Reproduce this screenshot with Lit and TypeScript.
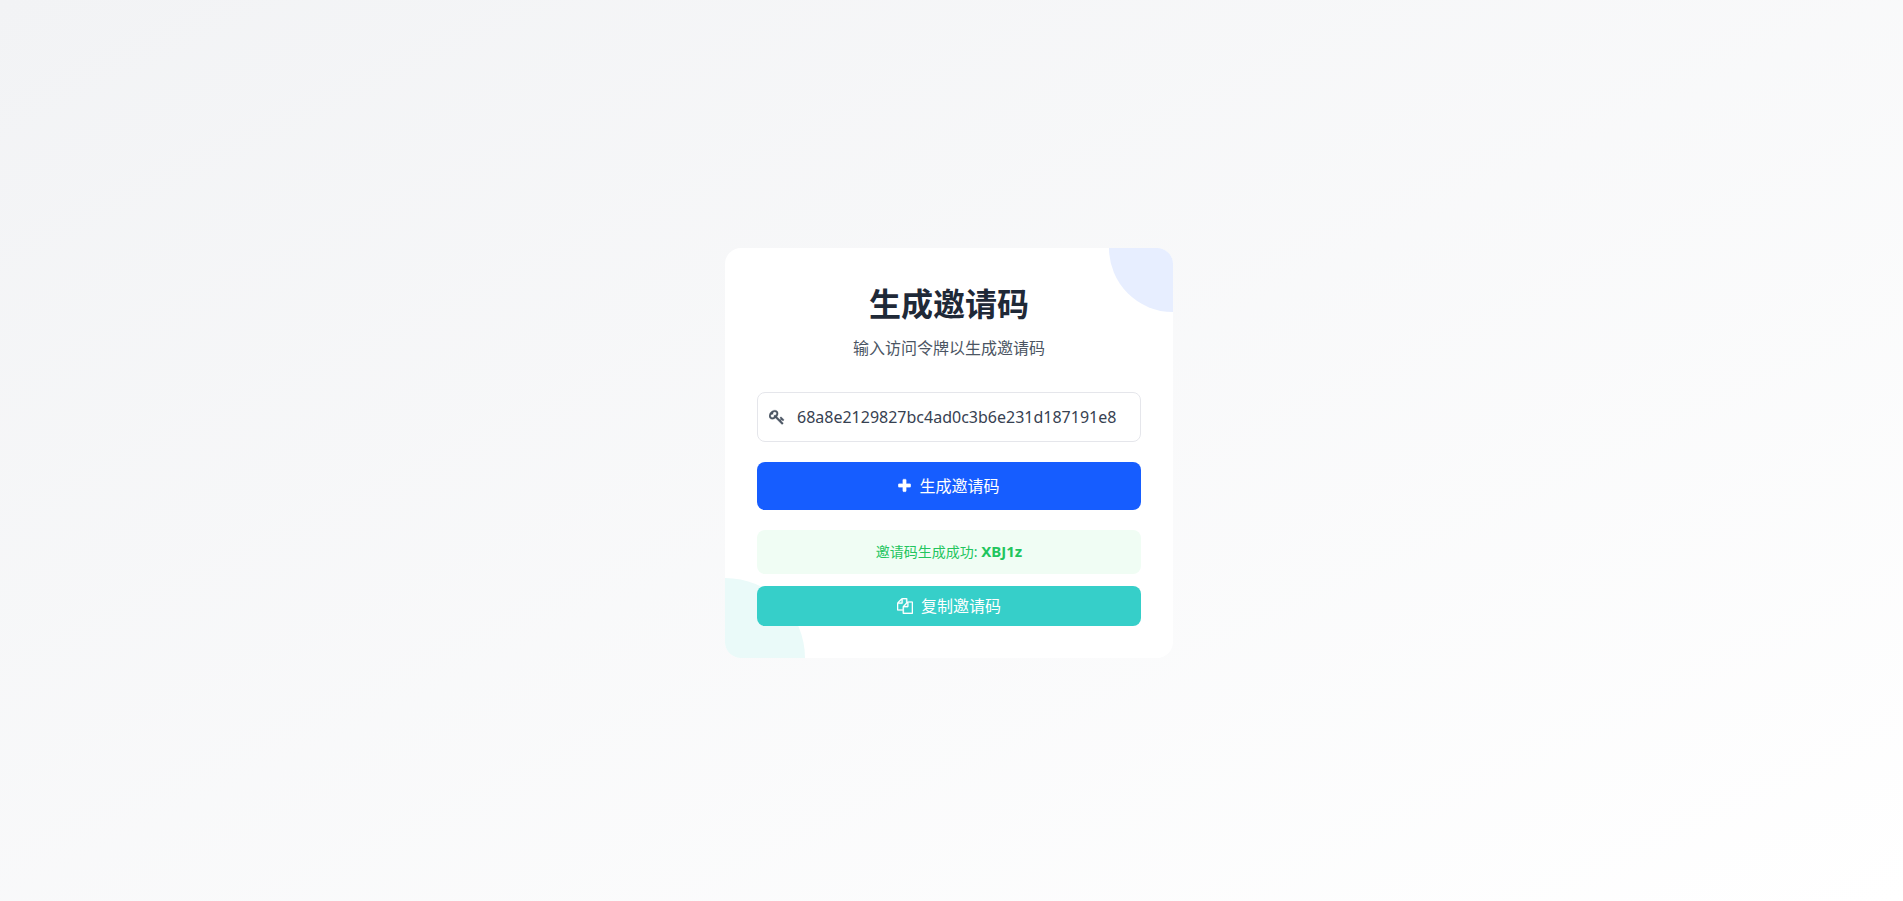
import { LitElement, html, css } from "lit";
import { customElement, state } from "lit/decorators.js";

@customElement("app-root")
export class AppRoot extends LitElement {
  @state() private token = "68a8e2129827bc4ad0c3b6e231d187191e8";
  @state() private code = "XBJ1z";

  static styles = css`
    :host {
      display: block;
      font-family: "Noto Sans", "Noto Sans CJK SC", sans-serif;
      font-size: 16px;
      line-height: 24px;
    }
    * {
      box-sizing: border-box;
    }
    .page {
      min-height: 100vh;
      display: flex;
      align-items: center;
      justify-content: center;
      padding: 20px 21px 16px 16px;
      background: linear-gradient(to bottom right, #f2f3f5, #ffffff);
    }
    .card {
      position: relative;
      overflow: hidden;
      width: 100%;
      max-width: 448px;
      padding: 32px;
      border-radius: 16px;
      background: #ffffff;
    }
    .blob {
      position: absolute;
      border-radius: 50%;
    }
    .blob-top {
      top: -64px;
      right: -64px;
      width: 128px;
      height: 128px;
      background: #e7eeff;
    }
    .blob-bottom {
      bottom: -80px;
      left: -80px;
      width: 160px;
      height: 160px;
      background: #eafaf9;
    }
    .content {
      position: relative;
      display: flex;
      flex-direction: column;
    }
    header {
      text-align: center;
      margin-bottom: 32px;
    }
    h1 {
      margin: 0 0 8px;
      font-size: 32px;
      line-height: 48px;
      font-weight: 700;
      color: #1f2937;
    }
    p {
      margin: 0;
      color: #4b5563;
    }
    form {
      display: flex;
      flex-direction: column;
      gap: 20px;
    }
    .field {
      display: flex;
      align-items: center;
      gap: 12px;
      height: 50px;
      padding: 0 12px 0 11px;
      border: 1px solid #e5e6eb;
      border-radius: 8px;
      background: #ffffff;
      color: #4b5563;
    }
    .field label {
      display: flex;
    }
    input {
      flex: 1;
      min-width: 0;
      height: 48px;
      padding: 0;
      border: 0;
      outline: 0;
      background: none;
      font: inherit;
      color: #374151;
    }
    svg {
      height: 16px;
      fill: currentColor;
      stroke: currentColor;
      stroke-width: 32;
      flex: none;
    }
    button {
      display: flex;
      align-items: center;
      justify-content: center;
      gap: 8px;
      width: 100%;
      border: 0;
      border-radius: 8px;
      font: inherit;
      font-weight: 400;
      color: #ffffff;
      cursor: pointer;
    }
    .generate {
      padding: 12px 16px;
      background: #165dff;
    }
    .copy {
      padding: 8px 16px;
      background: #36cfc9;
    }
    .result {
      margin: 20px 0 12px;
      padding: 12px;
      border-radius: 8px;
      background: #f0fdf4;
      color: #22c55e;
      font-size: 14px;
      line-height: 20px;
      text-align: center;
    }
    strong {
      font-size: 15px;
      line-height: 16px;
      font-weight: 700;
    }
  `;

  private onInput(e: Event) {
    this.token = (e.target as HTMLInputElement).value;
  }

  private onSubmit(e: Event) {
    e.preventDefault();
    const chars = "ABCDEFGHJKLMNPQRSTUVWXYZabcdefghijkmnpqrstuvwxyz123456789";
    this.code = Array.from({ length: 5 }, () => chars[Math.floor(Math.random() * chars.length)]).join("");
  }

  private onCopy() {
    navigator.clipboard?.writeText(this.code);
  }

  render() {
    return html`
      <main class="page">
        <section class="card">
          <div class="blob blob-top"></div>
          <div class="blob blob-bottom"></div>
          <div class="content">
            <header>
              <h1>生成邀请码</h1>
              <p>输入访问令牌以生成邀请码</p>
            </header>
            <form @submit=${this.onSubmit}>
              <div class="field">
                <label for="token" aria-label="访问令牌">
                  <svg width="16" viewBox="0 0 1792 1792" aria-hidden="true">
                    <path d="M832 512q0-80-56-136t-136-56-136 56-56 136q0 42 19 83-41-19-83-19-80 0-136 56t-56 136 56 136 136 56 136-56 56-136q0-42-19-83 41 19 83 19 80 0 136-56t56-136zm851 704q0 17-49 66t-66 49q-9 0-28.5-16t-36.5-33-38.5-40-24.5-26l-96 96 220 220q28 28 28 68 0 42-39 81t-81 39q-40 0-68-28l-671-671q-176 131-365 131-163 0-265.5-102.5t-102.5-265.5q0-160 95-313t248-248 313-95q163 0 265.5 102.5t102.5 265.5q0 189-131 365l355 355 96-96q-3-3-26-24.5t-40-38.5-33-36.5-16-28.5q0-17 49-66t66-49q13 0 23 10 6 6 46 44.5t82 79.5 86.5 86 73 78 28.5 41z"/>
                  </svg>
                </label>
                <input id="token" type="text" autocomplete="off" .value=${this.token} @input=${this.onInput} />
              </div>
              <button class="generate" type="submit">
                <svg width="13" viewBox="192 0 1408 1792" aria-hidden="true">
                  <path d="M1600 736v192q0 40-28 68t-68 28h-416v416q0 40-28 68t-68 28h-192q-40 0-68-28t-28-68v-416h-416q-40 0-68-28t-28-68v-192q0-40 28-68t68-28h416v-416q0-40 28-68t68-28h192q40 0 68 28t28 68v416h416q40 0 68 28t28 68z"/>
                </svg>
                <span>生成邀请码</span>
              </button>
            </form>
            <div class="result" role="status">邀请码生成成功: <strong>${this.code}</strong></div>
            <button class="copy" type="button" @click=${this.onCopy}>
              <svg width="16" viewBox="0 0 1792 1792" aria-hidden="true">
                <path d="M1696 384q40 0 68 28t28 68v1216q0 40-28 68t-68 28h-960q-40 0-68-28t-28-68v-288h-544q-40 0-68-28t-28-68v-672q0-40 20-88t48-76l408-408q28-28 76-48t88-20h416q40 0 68 28t28 68v328q68-40 128-40h416zm-544 213l-299 299h299v-299zm-640-384l-299 299h299v-299zm196 647l316-316v-416h-384v416q0 40-28 68t-68 28h-416v640h512v-256q0-40 20-88t48-76zm956 804v-1152h-384v416q0 40-28 68t-68 28h-416v640h896z"/>
              </svg>
              <span>复制邀请码</span>
            </button>
          </div>
        </section>
      </main>
    `;
  }
}
